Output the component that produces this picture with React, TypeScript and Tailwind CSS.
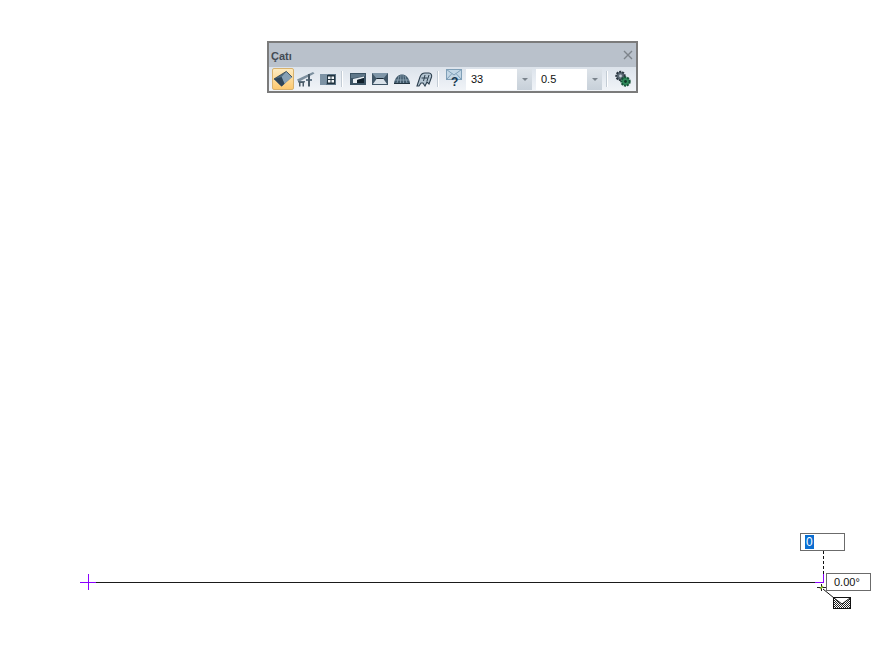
const uiFont = { fontFamily: '"Liberation Sans", Arial, sans-serif' };

function RoofIcon() {
	return (
		<svg width="21" height="18" viewBox="0 0 21 18">
			<path d="M1 9 L14 1 L20 7 L9 17 Z" fill="#4f6e85" />
			<path d="M14 1 L20 7 L12 14 L9 7 Z" fill="#86a0b5" />
			<path d="M1 9 L9 7 L12 14 L9 17 Z" fill="#2e4558" />
			<path d="M1 9 L14 1 L20 7" stroke="#24384a" fill="none" strokeWidth="0.8" />
		</svg>
	);
}

function BeamIcon() {
	return (
		<svg width="20" height="16" viewBox="0 0 20 16">
			<path d="M1 8.5 L17 1 L18.5 2.5 L2.5 11 Z" fill="#7c8f9e" />
			<path d="M2 10 H9 V11.5 H2 Z" fill="#5c6f7d" />
			<path d="M3 11 H8 V15.5 H6.5 V12 H4.5 V15.5 H3 Z" fill="#4a5b68" />
			<path d="M10 8 H16 V10 H10 Z" fill="#66798a" />
			<path d="M12 3 H14 V15.5 H12 Z" fill="#4a5b68" />
		</svg>
	);
}

function WindowIcon() {
	return (
		<svg width="16" height="11" viewBox="0 0 16 11">
			<rect width="16" height="11" fill="#5a7183" />
			<path d="M0 0 H8 L6 11 H0 Z" fill="#7d93a5" />
			<rect x="7" y="1" width="8" height="9" fill="#20333f" />
			<path d="M8 2.5 H10.5 V5 H8 Z M11.5 2.5 H14 V5 H11.5 Z M8 6 H10.5 V8.5 H8 Z M11.5 6 H14 V8.5 H11.5 Z" fill="#f2f5f8" />
		</svg>
	);
}

function ShedIcon() {
	return (
		<svg width="16" height="12" viewBox="0 0 16 12">
			<rect width="16" height="12" fill="#3c5364" />
			<path d="M1 1 H15 V3 L4 5 H1 Z" fill="#5f7789" />
			<path d="M3 10 V6 L14 3.5 V5 L7 7 V10 Z" fill="#e8eef3" />
			<path d="M7 10 V7 L14 5 V10 Z" fill="#10202c" />
		</svg>
	);
}

function HipIcon() {
	return (
		<svg width="16" height="12" viewBox="0 0 16 12">
			<rect width="16" height="12" fill="#3f5566" />
			<path d="M0 0 H16 L11.5 5.5 H4.5 Z" fill="#7f96a8" />
			<path d="M4.5 6 H11.5 L15 11 H1 Z" fill="#d9e2ea" />
			<path d="M4.5 5.5 H11.5" stroke="#172733" />
		</svg>
	);
}

function DomeIcon() {
	return (
		<svg width="16" height="10" viewBox="0 0 16 10">
			<path d="M0 9 C1 3 5 0.5 8 0.5 C11 0.5 15 3 16 9 Z" fill="#40596b" />
			<path d="M3 9 L5 2 M6.5 9 L7 0.5 M9.5 9 L9 0.5 M13 9 L11 2 M1 6 H15" stroke="#9fb4c4" strokeWidth="0.7" />
			<path d="M0 9.5 H16" stroke="#22333f" />
		</svg>
	);
}

function VaultIcon() {
	return (
		<svg width="17" height="15" viewBox="0 0 17 15">
			<path d="M1 14 L4 5 C5 2 7 1 9 1 H13 C15 1 16 3 15.5 5 L13 12 L11 10 L9 14 L7 11 L5 11 L3 14 Z" fill="#b4c5d2" stroke="#2c3f4e" strokeWidth="1.1" />
			<path d="M9 3 L7.5 9 M5.5 6 H11.5 M13 3 L11 9" stroke="#2c3f4e" strokeWidth="1" />
		</svg>
	);
}

function MailQuestionIcon() {
	return (
		<div className="relative h-[20px] w-[16px]">
			<svg width="16" height="11" viewBox="0 0 16 11" className="block">
				<rect x="0.5" y="0.5" width="15" height="10" fill="#c2d6e5" stroke="#7f9fb7" />
				<path d="M0.5 0.5 L8 6 L15.5 0.5 M0.5 10.5 L6 4.5 M15.5 10.5 L10 4.5" stroke="#7f9fb7" fill="none" />
			</svg>
			<span className="absolute left-[5px] top-[7px] text-[12px] font-bold leading-[13px] text-[#16384f]">?</span>
		</div>
	);
}

function GearsIcon() {
	return (
		<svg width="18" height="18" viewBox="0 0 18 18">
			<circle cx="6.5" cy="6" r="4.2" fill="#5a6873" stroke="#2b3740" strokeDasharray="2 1" strokeWidth="2" />
			<circle cx="6.5" cy="6" r="1.4" fill="#c3ced6" />
			<circle cx="11.5" cy="11.5" r="4.2" fill="#2f8a5b" stroke="#155237" strokeDasharray="2 1" strokeWidth="2" />
			<circle cx="11.5" cy="11.5" r="1.4" fill="#0f3a27" />
		</svg>
	);
}

function Divider() {
	return <div className="mx-[4px] h-[16px] w-[2px] border-r border-white bg-[#c3ccd5]" />;
}

function ComboBox({ value }: { value: string }) {
	return (
		<div className="flex h-[21px] w-[66px] items-stretch bg-white">
			<span className="flex-1 pl-[5px] text-[11px] leading-[21px] text-[#101010]">{value}</span>
			<span className="flex w-[15px] items-center justify-center bg-gradient-to-b from-[#dde3e9] to-[#c7d0d9]">
				<span className="h-0 w-0 border-x-[3px] border-t-[3px] border-x-transparent border-t-[#7a838c]" />
			</span>
		</div>
	);
}

function ToolButton({ children, active }: { children: React.ReactNode; active?: boolean }) {
	return (
		<div
			className={
				active
					? "flex h-[22px] w-[22px] items-center justify-center rounded-[2px] border border-[#d8b26e] bg-gradient-to-b from-[#fdebc0] to-[#fcc96f]"
					: "flex h-[22px] w-[22px] items-center justify-center"
			}
		>
			{children}
		</div>
	);
}

export default function App() {
	return (
		<div className="relative h-[651px] w-[896px] overflow-hidden bg-white pt-[41px]" style={uiFont}>
			<div className="ml-[267px] w-[371px] border-2 border-[#7b7b7b]">
				<div className="flex h-[24px] items-center justify-between bg-[#b9c1cb] pl-[2px] pr-[3px]">
					<span className="pt-[2px] text-[11px] font-bold text-[#434b54]">Çatı</span>
					<svg width="10" height="10" viewBox="0 0 10 10">
						<path d="M1 1 L9 9 M9 1 L1 9" stroke="#7d848b" strokeWidth="1.4" />
					</svg>
				</div>
				<div className="flex h-[24px] items-center bg-gradient-to-b from-[#dce3eb] to-[#f1f4f8] pl-[3px]">
					<ToolButton active><RoofIcon /></ToolButton>
					<div className="ml-[1px]"><ToolButton><BeamIcon /></ToolButton></div>
					<ToolButton><WindowIcon /></ToolButton>
					<div className="-ml-[2px]"><Divider /></div>
					<ToolButton><ShedIcon /></ToolButton>
					<ToolButton><HipIcon /></ToolButton>
					<ToolButton><DomeIcon /></ToolButton>
					<ToolButton><VaultIcon /></ToolButton>
					<div className="-ml-[2px]"><Divider /></div>
					<ToolButton><MailQuestionIcon /></ToolButton>
					<div className="ml-[1px]"><ComboBox value="33" /></div>
					<div className="ml-[4px]"><ComboBox value="0.5" /></div>
					<Divider />
					<ToolButton><GearsIcon /></ToolButton>
				</div>
			</div>

			{/* drawing canvas */}
			<div className="absolute left-[88px] top-[582px] h-px w-[735px] bg-[#1a1a1a]" />
			<div className="absolute left-[80px] top-[582px] h-px w-[16px] bg-[#8b00ff]" />
			<div className="absolute left-[88px] top-[574px] h-[16px] w-px bg-[#8b00ff]" />
			<div className="absolute left-[815px] top-[582px] h-px w-[8px] bg-[#8b00ff]" />
			<div className="absolute left-[823px] top-[574px] h-[9px] w-px bg-[#8b00ff]" />
			<svg className="absolute left-[823px] top-[551px]" width="1" height="23" viewBox="0 0 1 23">
				<path d="M0.5 0 V23" stroke="#111" strokeDasharray="3 2" />
			</svg>

			<div className="absolute left-[800px] top-[533px] flex h-[18px] w-[45px] items-center border border-[#6b6b6b] bg-white pl-[4px]">
				<span className="bg-[#0a6ed1] px-px text-[12px] leading-[14px] text-white">0</span>
			</div>
			<div className="absolute left-[826px] top-[573px] flex h-[18px] w-[45px] items-center border border-[#6b6b6b] bg-white pl-[7px] text-[11px] text-[#111]">
				0.00°
			</div>

			<svg className="absolute left-[816px] top-[584px]" width="38" height="28" viewBox="0 0 38 28">
				<defs>
					<pattern id="hatch" width="2" height="2" patternUnits="userSpaceOnUse">
						<rect width="2" height="2" fill="#fff" />
						<rect width="1" height="1" fill="#222" />
						<rect x="1" y="1" width="1" height="1" fill="#222" />
					</pattern>
				</defs>
				<path d="M1 3.5 H10 M5.5 0 V7" stroke="#222" />
				<path d="M4 5 L7 2" stroke="#9acd32" strokeWidth="1.4" />
				<path d="M7 5 L18 14" stroke="#111" />
				<rect x="17.5" y="13.5" width="17" height="11" fill="#fff" stroke="#111" />
				<path d="M18 14 L26 20 L34 14 V24 H18 Z" fill="url(#hatch)" />
				<path d="M18 14 L26 20 L34 14" stroke="#111" fill="none" />
			</svg>
		</div>
	);
}
